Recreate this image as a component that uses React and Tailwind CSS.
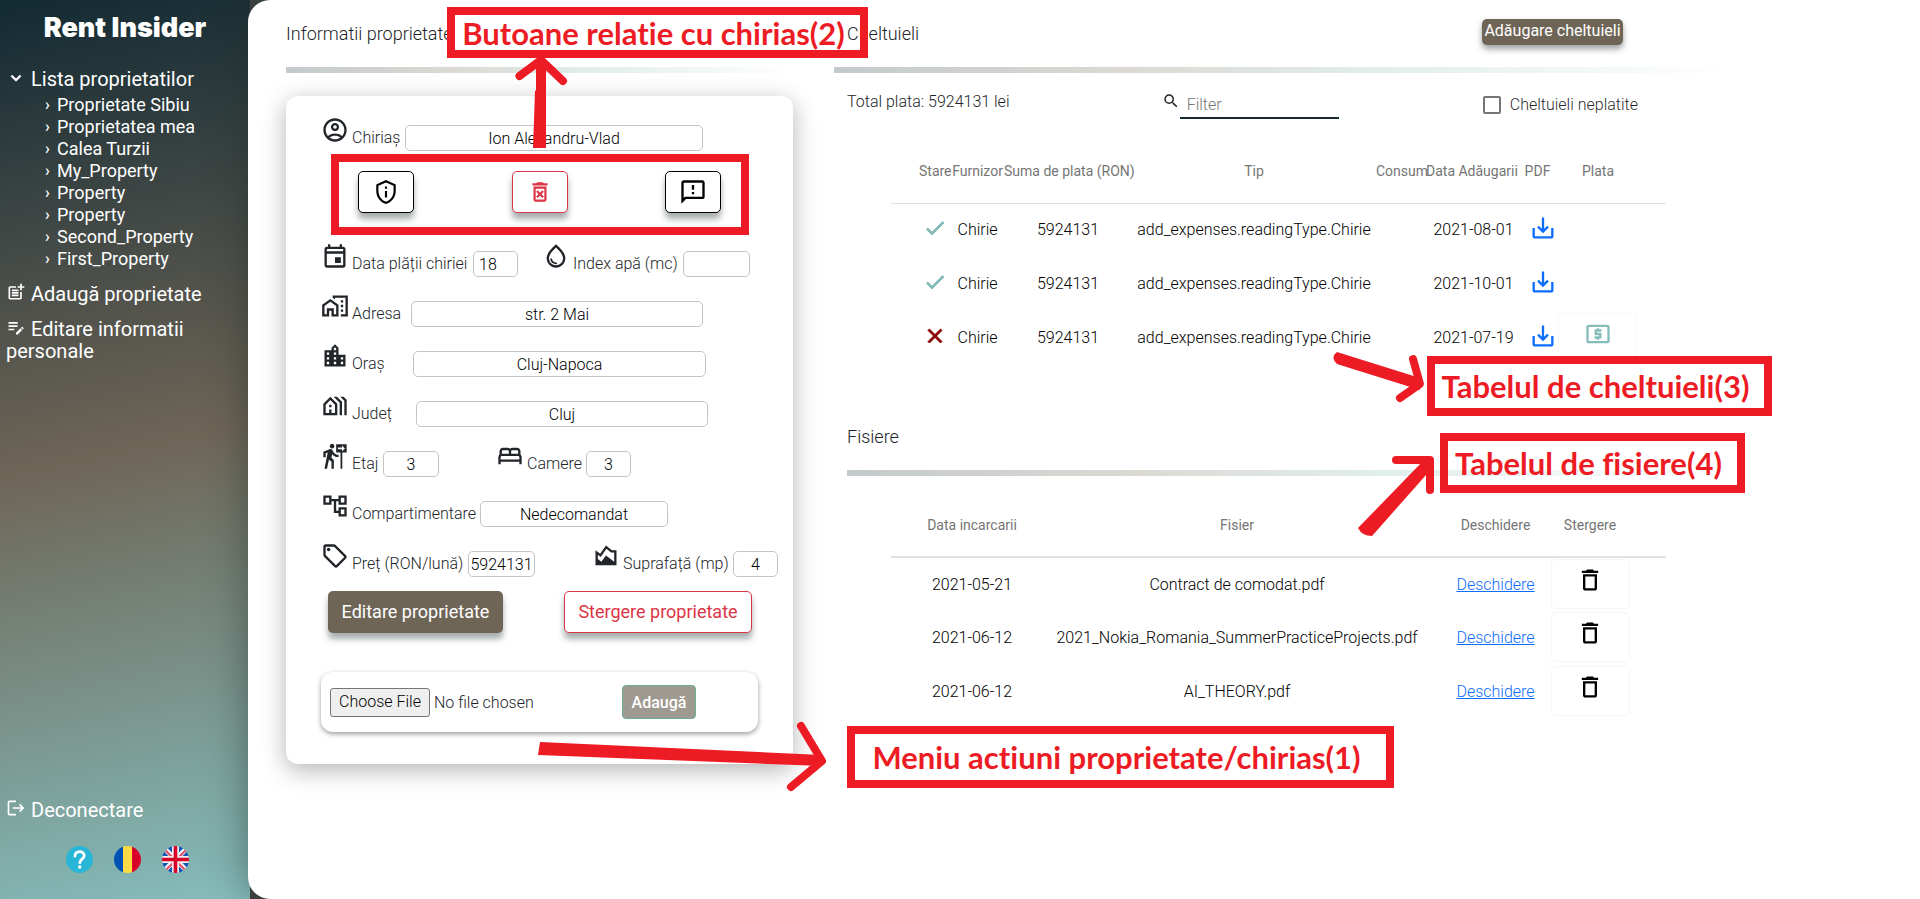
import React from "react";
import {
  MdOutlineAccountCircle,
  MdOutlinePrivacyTip,
  MdOutlineDeleteForever,
  MdOutlineFeedback,
  MdOutlineEvent,
  MdOutlineWaterDrop,
  MdOutlineHomeWork,
  MdOutlineLocationCity,
  MdOutlineHolidayVillage,
  MdOutlineFollowTheSigns,
  MdOutlineBed,
  MdOutlineAccountTree,
  MdOutlineSell,
  MdOutlineAreaChart,
  MdSearch,
  MdCheck,
  MdClose,
  MdSaveAlt,
  MdOutlineLocalAtm,
  MdDeleteOutline,
  MdKeyboardArrowDown,
  MdOutlinePostAdd,
  MdEditNote,
  MdLogout,
} from "react-icons/md";

const properties = [
  "Proprietate Sibiu",
  "Proprietatea mea",
  "Calea Turzii",
  "My_Property",
  "Property",
  "Property",
  "Second_Property",
  "First_Property",
];

const expenses = [
  { paid: true, date: "2021-08-01" },
  { paid: true, date: "2021-10-01" },
  { paid: false, date: "2021-07-19" },
];

const files = [
  { date: "2021-05-21", name: "Contract de comodat.pdf" },
  { date: "2021-06-12", name: "2021_Nokia_Romania_SummerPracticeProjects.pdf" },
  { date: "2021-06-12", name: "AI_THEORY.pdf" },
];

function HelpIcon() {
  return (
    <svg viewBox="0 0 27 27" className="size-[27px]">
      <circle cx="13.5" cy="13.5" r="13.5" fill="#29b6d6" />
      <path d="M9 10.2c0-2.8 2-4.6 4.6-4.6s4.6 1.7 4.6 4.1c0 3.2-4.4 3.7-4.4 7" fill="none" stroke="#fff" strokeWidth="2.8" strokeLinecap="round" />
      <circle cx="13.7" cy="21" r="1.8" fill="#fff" />
    </svg>
  );
}

function RomanianFlag() {
  return (
    <svg viewBox="0 0 27 27" className="size-[27px]">
      <clipPath id="ro"><circle cx="13.5" cy="13.5" r="13.5" /></clipPath>
      <g clipPath="url(#ro)">
        <path fill="#0052b4" d="M0 0h9v27H0z" />
        <path fill="#ffda44" d="M9 0h9v27H9z" />
        <path fill="#d80027" d="M18 0h9v27h-9z" />
      </g>
    </svg>
  );
}

function BritishFlag() {
  return (
    <svg viewBox="0 0 27 27" className="size-[27px]">
      <clipPath id="gb"><circle cx="13.5" cy="13.5" r="13.5" /></clipPath>
      <g clipPath="url(#gb)">
        <path fill="#0f56b5" d="M0 0h27v27H0z" />
        <path stroke="#f0f0f0" strokeWidth="5" d="M0 0l27 27M27 0L0 27" />
        <path stroke="#e0506a" strokeWidth="2" d="M0 1l27 27M28 0L1 27" />
        <path stroke="#f0f0f0" strokeWidth="7" d="M13.5 0v27M0 13.5h27" />
        <path stroke="#d80027" strokeWidth="3.6" d="M13.5 0v27M0 13.5h27" />
      </g>
    </svg>
  );
}

function Field({ id, icon: Icon, label, value, labelClass, inputClass, className = "" }) {
  return (
    <div className={`flex h-[50px] items-center ${className}`}>
      <Icon className="mt-[3px] mr-[3px] size-7 shrink-0 self-start text-[#212529]" />
      <label htmlFor={id} className={`shrink-0 whitespace-nowrap ${labelClass}`}>{label}</label>
      <input
        id={id}
        defaultValue={value}
        className={`h-[26px] min-w-0 rounded-[5px] border border-[#c4c4c4] bg-white text-black ${inputClass}`}
      />
    </div>
  );
}

function Rule() {
  return <div className="h-[6px] bg-[linear-gradient(90deg,#c3cacc,#dcd9d3_33%,#e0eeec_60%,#ffffff)]" />;
}

function Sidebar() {
  return (
    <aside className="flex min-h-[899px] w-[250px] shrink-0 flex-col bg-[linear-gradient(168deg,#122a33,#6e6557_50%,#85bdbb)] text-xl leading-[22px] font-normal text-white">
      <h1 className="mt-3 text-center font-[Inter] text-[27px] leading-8 font-black">Rent Insider</h1>
      <nav className="mt-6 flex flex-col px-[6px]">
        <button type="button" className="flex items-start text-left">
          <MdKeyboardArrowDown className="mr-[5px] size-5 [&>path:last-child]:stroke-1" />
          Lista proprietatilor
        </button>
        <ul className="mt-1 pl-[39px] text-lg leading-[22px]">
          {properties.map((name, i) => (
            <li key={i}>
              <a href="#proprietate" className="flex">
                <span aria-hidden="true" className="w-3 text-base leading-[21px] font-medium">›</span>
                {name}
              </a>
            </li>
          ))}
        </ul>
        <a href="#adauga" className="mt-3">
          <MdOutlinePostAdd className="mr-[5px] inline size-5 align-text-top" />
          Adaugă proprietate
        </a>
        <a href="#editare" className="mt-3">
          <MdEditNote className="mr-[5px] inline size-5 align-text-top" />
          Editare informatii personale
        </a>
      </nav>
      <div className="mt-auto px-[6px] pb-[26px]">
        <a href="#deconectare">
          <MdLogout className="mr-[5px] inline size-5 align-text-top" />
          Deconectare
        </a>
        <div className="mt-[25px] ml-[60px] flex gap-[21px]">
          <button type="button" aria-label="Ajutor"><HelpIcon /></button>
          <button type="button" aria-label="Română"><RomanianFlag /></button>
          <button type="button" aria-label="English"><BritishFlag /></button>
        </div>
      </div>
    </aside>
  );
}

function PropertyCard() {
  const action = "flex h-[42px] w-14 items-center justify-center rounded-[5px] border bg-white shadow-[0_6px_6px_rgba(60,70,70,0.45)]";
  return (
    <div className="mt-[23px] rounded-xl bg-white px-[35px] pt-[17px] pb-8 shadow-[0_6px_24px_rgba(0,0,0,0.3)]">
      <Field id="chirias" icon={MdOutlineAccountCircle} label="Chiriaș" value="Ion Alexandru-Vlad" labelClass="w-[53px]" inputClass="w-[298px] text-center" />
      <div className="mt-2 mb-[26px] flex justify-between px-[37px]">
        <button type="button" aria-label="Informatii chirias" className={`${action} border-black text-black`}><MdOutlinePrivacyTip className="size-[26px]" /></button>
        <button type="button" aria-label="Sterge chirias" className={`${action} border-[#dc3545] text-[#dc3545]`}><MdOutlineDeleteForever className="size-[26px]" /></button>
        <button type="button" aria-label="Mesaj chirias" className={`${action} border-black text-black`}><MdOutlineFeedback className="size-7" /></button>
      </div>
      <div className="flex">
        <Field id="data" icon={MdOutlineEvent} label="Data plății chiriei" value="18" labelClass="w-[121px]" inputClass="w-[45px] px-[5px]" />
        <Field id="index" icon={MdOutlineWaterDrop} label="Index apă (mc)" value="" labelClass="w-[110px]" inputClass="w-[67px]" className="ml-6" />
      </div>
      <Field id="adresa" icon={MdOutlineHomeWork} label="Adresa" value="str. 2 Mai" labelClass="w-[59px]" inputClass="w-[292px] text-center" />
      <Field id="oras" icon={MdOutlineLocationCity} label="Oraș" value="Cluj-Napoca" labelClass="w-[61px]" inputClass="w-[293px] text-center" />
      <Field id="judet" icon={MdOutlineHolidayVillage} label="Județ" value="Cluj" labelClass="w-[64px]" inputClass="w-[292px] text-center" />
      <div className="flex">
        <Field id="etaj" icon={MdOutlineFollowTheSigns} label="Etaj" value="3" labelClass="w-[31px]" inputClass="w-14 text-center" />
        <Field id="camere" icon={MdOutlineBed} label="Camere" value="3" labelClass="w-[59px]" inputClass="w-[45px] text-center" className="ml-[57px]" />
      </div>
      <Field id="compartimentare" icon={MdOutlineAccountTree} label="Compartimentare" value="Nedecomandat" labelClass="w-[128px]" inputClass="w-[188px] text-center" />
      <div className="-mr-6 flex">
        <Field id="pret" icon={MdOutlineSell} label="Preț (RON/lună)" value="5924131" labelClass="w-[116px]" inputClass="w-[67px] text-center" />
        <Field id="suprafata" icon={MdOutlineAreaChart} label="Suprafață (mp)" value="4" labelClass="w-[110px]" inputClass="w-[45px] text-center" className="ml-[57px]" />
      </div>
      <div className="mt-[2px] flex justify-between pr-[6px] pl-[7px] text-lg">
        <button type="button" className="h-[42px] w-[175px] rounded-[5px] bg-[#6e6557] font-normal text-white shadow-[0_6px_6px_rgba(60,70,70,0.45)]">Editare proprietate</button>
        <button type="button" className="h-[42px] w-[188px] rounded-[5px] border border-[#dc3545] bg-white font-normal text-[#dc3545] shadow-[0_6px_6px_rgba(60,70,70,0.45)]">Stergere proprietate</button>
      </div>
      <div className="mt-[39px] flex h-[60px] items-center justify-between rounded-xl bg-white pr-[62px] pl-[9px] shadow-[0_2px_5px_rgba(0,0,0,0.4)]">
        <input
          type="file"
          aria-label="Fisier"
          className="w-[240px] text-[#212529] file:mr-1 file:h-[29px] file:w-[100px] file:rounded-[3px] file:border file:border-solid file:border-[#767676] file:bg-[#efefef] file:p-0 file:text-base file:font-light file:text-black"
        />
        <button type="button" className="h-[34px] w-[74px] rounded-[4px] border border-[#6cae90] bg-[#9f9a91] pt-[2px] font-medium text-white">Adaugă</button>
      </div>
    </div>
  );
}

function ExpensesTable() {
  return (
    <table className="w-full table-fixed border-collapse text-center text-black">
      <colgroup>
        <col className="w-[60px]" /><col className="w-[53px]" /><col className="w-[128px]" /><col />
        <col className="w-[50px]" /><col className="w-[91px]" /><col className="w-[41px]" /><col className="w-[108px]" />
      </colgroup>
      <thead>
        <tr className="h-[65px] border-b border-[#e0e0e0] text-sm whitespace-nowrap text-[#757575]">
          <th className="pt-[2px] pl-7 font-normal">Stare</th>
          <th className="pt-[2px] font-normal">Furnizor</th>
          <th className="pt-[2px] font-normal">Suma de plata (RON)</th>
          <th className="pt-[2px] font-normal">Tip</th>
          <th className="pt-[2px] font-normal">Consum</th>
          <th className="pt-[2px] font-normal">Data Adăugarii</th>
          <th className="pt-[2px] font-normal">PDF</th>
          <th className="pt-[2px] pr-7 font-normal">Plata</th>
        </tr>
      </thead>
      <tbody>
        {expenses.map((row) => (
          <tr key={row.date} className="h-[54px]">
            <td className="pb-1 pl-8">
              {row.paid ? (
                <MdCheck className="size-6 text-[#86bcba] [&>path:last-child]:stroke-1" />
              ) : (
                <MdClose className="size-6 text-[#8b0000] [&>path:last-child]:stroke-1" />
              )}
            </td>
            <td>Chirie</td>
            <td>5924131</td>
            <td>add_expenses.readingType.Chirie</td>
            <td />
            <td className="pl-1">{row.date}</td>
            <td className="pb-1 pl-3">
              <a href="#pdf" aria-label="PDF"><MdSaveAlt className="size-7 text-[#0d6efd]" /></a>
            </td>
            <td className="pr-7">
              {!row.paid && (
                <button type="button" aria-label="Plata" className="flex h-[50px] w-[79px] items-start justify-center rounded-[5px] border border-[#f8f8f8] pt-[6px]">
                  <MdOutlineLocalAtm className="size-7 text-[#86bcba]" />
                </button>
              )}
            </td>
          </tr>
        ))}
      </tbody>
    </table>
  );
}

function FilesTable() {
  return (
    <table className="w-full table-fixed border-collapse text-center text-black">
      <colgroup>
        <col className="w-[134px]" /><col /><col className="w-[93px]" /><col className="w-[124px]" />
      </colgroup>
      <thead>
        <tr className="h-[65px] border-b-2 border-[#dee2e1] text-sm whitespace-nowrap text-[#757575]">
          <th className="pt-[2px] pl-7 font-normal">Data incarcarii</th>
          <th className="pt-[2px] font-normal">Fisier</th>
          <th className="pt-[2px] font-normal">Deschidere</th>
          <th className="pt-[2px] pr-7 font-normal">Stergere</th>
        </tr>
      </thead>
      <tbody>
        {files.map((row) => (
          <tr key={row.name} className="h-[54px]">
            <td className="pl-7">{row.date}</td>
            <td>{row.name}</td>
            <td><a href="#fisier" className="text-[#0d6efd] underline">Deschidere</a></td>
            <td className="pr-7 align-top">
              <button type="button" aria-label="Stergere" className="mx-auto mt-px flex h-[50px] w-[79px] items-start justify-center rounded-[5px] border border-[#f6f6f6] pt-[6px]">
                <MdDeleteOutline className="size-7 text-black" />
              </button>
            </td>
          </tr>
        ))}
      </tbody>
    </table>
  );
}

function Annotations() {
  const box = "absolute flex items-center justify-center border-8 border-[#ed1c24] pr-2 font-[Lato] text-[31px] leading-8 font-bold whitespace-nowrap text-[#ed1c24] [font-variant-ligatures:none]";
  return (
    <div className="pointer-events-none absolute inset-0">
      <div className={`${box} top-[7px] left-[447px] h-[51px] w-[421px]`}>Butoane relatie cu chirias(2)</div>
      <div className={`${box} top-[154px] left-[331px] h-[81px] w-[418px]`} />
      <div className={`${box} top-[356px] left-[1427px] h-[60px] w-[345px]`}>Tabelul de cheltuieli(3)</div>
      <div className={`${box} top-[433px] left-[1440px] h-[60px] w-[305px]`}>Tabelul de fisiere(4)</div>
      <div className={`${box} top-[726px] left-[847px] h-[62px] w-[547px]`}>Meniu actiuni proprietate/chirias(1)</div>
      <svg className="absolute top-0 left-0 h-[899px] w-[1920px]" fill="none" stroke="#ed1c24" strokeWidth="8" strokeLinecap="round" strokeLinejoin="round">
        <path d="M519.500 76 L541 60 L563 81" />
        <path d="M536 60 L546 60 L546 148 L533 148 L535 91 L536 90Z" fill="#ed1c24" stroke="none" />
        <path d="M1413 359 L1420 384 L1400 398" />
        <path d="M1337 352 L1420 378 L1420 390 L1337 364 Q1330 357 1337 352Z" fill="#ed1c24" stroke="none" />
        <path d="M1396 460 L1430 460 L1430 490" />
        <path d="M1426 458 L1434 466 L1372 536 Q1362 536 1358 528Z" fill="#ed1c24" stroke="none" />
        <path d="M801 726 L822 761 L791 787" />
        <path d="M540 742 L822 755 L822 766 L538 755Z" fill="#ed1c24" stroke="none" />
      </svg>
    </div>
  );
}

export default function App() {
  return (
    <div className="relative flex min-h-screen overflow-hidden bg-[#3f4543] font-[Roboto,sans-serif] text-base font-light text-[#212529]">
      <Sidebar />
      <main className="relative -ml-[2px] flex min-w-0 flex-1 gap-[41px] rounded-l-[22px] bg-white pl-[38px] shadow-[0_0_40px_rgba(30,40,35,0.5)]">
        <section className="w-[507px] shrink-0">
          <h2 className="flex h-[67px] items-center text-lg">Informatii proprietate</h2>
          <Rule />
          <PropertyCard />
        </section>
        <section className="min-w-0 flex-1 pr-[186px]">
          <header className="flex h-[67px] items-center justify-between pr-[111px] pl-[13px]">
            <h2 className="text-lg">Cheltuieli</h2>
            <button type="button" className="mb-1 h-[26px] w-[141px] rounded-[5px] bg-[#6e6557] pb-[2px] font-normal whitespace-nowrap text-white shadow-[0_4px_6px_rgba(60,70,70,0.5)]">Adăugare cheltuieli</button>
          </header>
          <Rule />
          <div className="flex h-[65px] items-center justify-between pr-24 pl-[13px]">
            <p className="pb-2">Total plata: 5924131 lei</p>
            <div className="ml-2 flex items-center">
              <MdSearch className="mb-[10px] size-[18px]" />
              <input aria-label="Filter" placeholder="Filter" className="h-[26px] w-[159px] border-b-2 border-[#152a33] px-[7px] placeholder:text-[#757575]" />
            </div>
            <label className="flex items-center gap-[9px] pb-[2px] text-[rgba(0,0,0,0.87)]">
              <input type="checkbox" className="size-[18px] appearance-none rounded-[2px] border-2 border-[#757575]" />
              Cheltuieli neplatite
            </label>
          </div>
          <div className="pr-[68px] pl-[57px]"><ExpensesTable /></div>
          <div className="mt-[38px] pl-[13px]">
            <h2 className="flex h-[67px] items-center text-lg">Fisiere</h2>
            <Rule />
          </div>
          <div className="mt-4 pr-[68px] pl-[57px]"><FilesTable /></div>
        </section>
      </main>
      <Annotations />
    </div>
  );
}
